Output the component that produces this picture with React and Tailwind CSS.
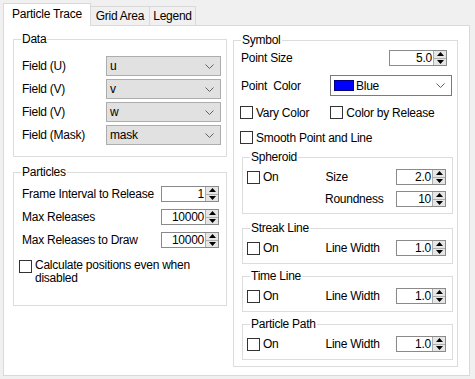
import React from 'react';

// chevron used by the drop-down lists
const Chevron = () => (
  <svg width="9" height="5" viewBox="0 0 9 5" className="shrink-0">
    <path d="M0.5 0.5 L4.5 4.5 L8.5 0.5" fill="none" stroke="#606060" strokeWidth="1" />
  </svg>
);

const Spin = ({ value, width }) => (
  <div className={`flex h-[16px] border border-[#8a8a8a] bg-white ${width}`}>
    <div className="flex-1 text-right pr-[1px] leading-[14px]">{value}</div>
    <div className="flex w-[13px] flex-col border-l border-[#adadad] bg-[#e6e6e6]">
      <div className="flex flex-1 items-center justify-center border-b border-[#adadad]">
        <svg width="7" height="4" viewBox="0 0 7 4"><path d="M0 4 L3.5 0 L7 4 Z" fill="#000" /></svg>
      </div>
      <div className="flex flex-1 items-center justify-center">
        <svg width="7" height="4" viewBox="0 0 7 4"><path d="M0 0 L3.5 4 L7 0 Z" fill="#000" /></svg>
      </div>
    </div>
  </div>
);

const Check = () => <div className="h-[13px] w-[13px] shrink-0 border border-[#333] bg-white" />;

const Group = ({ title, className, children }) => (
  <fieldset className={`border border-[#dcdcdc] ${className}`}>
    <legend className="ml-[7px] px-[1px] leading-[14px]">{title}</legend>
    {children}
  </fieldset>
);

const FieldRow = ({ label, value }) => (
  <div className="flex h-[20px] items-center justify-between">
    <span>{label}</span>
    <div className="flex h-[20px] w-[115px] items-center justify-between border border-[#adadad] bg-[#e1e1e1] pl-[3px] pr-[6px]">
      <span>{value}</span>
      <Chevron />
    </div>
  </div>
);

const SpinRow = ({ label, value }) => (
  <div className="flex h-[16px] items-center justify-between">
    <span>{label}</span>
    <Spin value={value} width="w-[58px]" />
  </div>
);

const OnGroup = ({ title, className }) => (
  <Group title={title} className={className}>
    <div className="flex h-[16px] items-center pl-[4px] pr-[6px] mt-[5px] mb-[7px]">
      <Check />
      <span className="ml-[3px]">On</span>
      <span className="ml-[47px]">Line Width</span>
      <div className="ml-auto">
        <Spin value="1.0" width="w-[50px]" />
      </div>
    </div>
  </Group>
);

export default function App() {
  return (
    <div className="h-[379px] w-[475px] bg-[#f0f0f0] px-[3px] pt-[3px] font-['Liberation_Sans',sans-serif] text-[12px] tracking-[-0.25px] text-black">
      {/* tabs */}
      <div className="flex h-[22px] items-start">
        <div className="relative z-10 flex h-[23px] w-[88px] items-center justify-center border-l border-r border-t border-[#d9d9d9] bg-white pb-[2px]">
          Particle Trace
        </div>
        <div className="mt-[3px] flex h-[19px] w-[59px] items-center justify-center border-r border-t border-[#d9d9d9]">
          Grid Area
        </div>
        <div className="mt-[3px] flex h-[19px] w-[46px] items-center justify-center border-r border-t border-[#d9d9d9]">
          Legend
        </div>
      </div>

      {/* panel */}
      <div className="flex h-[351px] w-[467px] items-start gap-[6px] border border-[#d9d9d9] bg-white pl-[9px] pr-[11px] pt-[6px]">
        <div className="flex w-[214px] flex-col gap-[8px]">
          <Group title="Data">
            <div className="flex flex-col gap-[3px] pl-[8px] pr-[5px] pt-[10px] pb-[11px]">
              <FieldRow label="Field (U)" value="u" />
              <FieldRow label="Field (V)" value="v" />
              <FieldRow label="Field (V)" value="w" />
              <FieldRow label="Field (Mask)" value="mask" />
            </div>
          </Group>
          <Group title="Particles">
            <div className="flex flex-col pl-[8px] pr-[7px] pt-[7px] pb-[20px]">
              <div className="flex flex-col gap-[7px]">
                <SpinRow label="Frame Interval to Release" value="1" />
                <SpinRow label="Max Releases" value="10000" />
                <SpinRow label="Max Releases to Draw" value="10000" />
              </div>
              <div className="-ml-[3px] mt-[12px] flex items-start">
                <Check />
                <span className="ml-[3px] -mt-[1px] leading-[13px]">
                  Calculate positions even when
                  <br />
                  disabled
                </span>
              </div>
            </div>
          </Group>
        </div>

        <Group title="Symbol" className="mt-[1px] w-[225px]">
          <div className="flex flex-col pb-[6px]">
            <div className="mt-[3px] flex h-[16px] items-center justify-between pl-[7px] pr-[10px]">
              <span>Point Size</span>
              <Spin value="5.0" width="w-[58px]" />
            </div>
            <div className="mt-[9px] flex h-[21px] items-center justify-between pl-[7px] pr-[5px]">
              <span className="whitespace-pre">Point  Color</span>
              <div className="flex h-[21px] w-[122px] items-center border border-[#7a7a7a] bg-white pl-[3px] pr-[6px]">
                <div className="h-[11px] w-[20px] border border-[#000080] bg-[#0000ff]" />
                <span className="ml-[2px]">Blue</span>
                <div className="ml-auto">
                  <Chevron />
                </div>
              </div>
            </div>
            <div className="mt-[10px] flex h-[13px] items-center pl-[6px]">
              <Check />
              <span className="ml-[3px]">Vary Color</span>
              <div className="ml-[21px] flex items-center">
                <Check />
                <span className="ml-[3px]">Color by Release</span>
              </div>
            </div>
            <div className="mt-[12px] flex h-[13px] items-center pl-[6px]">
              <Check />
              <span className="ml-[3px]">Smooth Point and Line</span>
            </div>

            <Group title="Spheroid" className="ml-[8px] mt-[6px] w-[211px]">
              <div className="flex flex-col gap-[6px] pl-[4px] pr-[6px] pt-[5px] pb-[6px]">
                <div className="flex h-[16px] items-center">
                  <Check />
                  <span className="ml-[3px]">On</span>
                  <span className="ml-[47px]">Size</span>
                  <div className="ml-auto">
                    <Spin value="2.0" width="w-[50px]" />
                  </div>
                </div>
                <div className="flex h-[16px] items-center">
                  <span className="ml-[78px]">Roundness</span>
                  <div className="ml-auto">
                    <Spin value="10" width="w-[50px]" />
                  </div>
                </div>
              </div>
            </Group>

            <OnGroup title="Streak Line" className="ml-[8px] mt-[7px] w-[211px]" />
            <OnGroup title="Time Line" className="ml-[8px] mt-[5px] w-[211px]" />
            <OnGroup title="Particle Path" className="ml-[8px] mt-[5px] w-[211px]" />
          </div>
        </Group>
      </div>
    </div>
  );
}
